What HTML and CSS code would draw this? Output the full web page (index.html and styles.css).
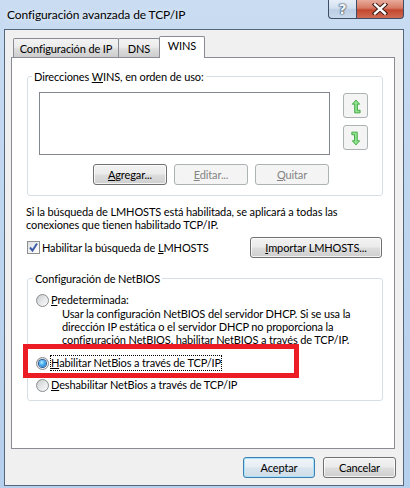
FILE: index.html
```html
<!DOCTYPE html>
<html>
<head>
    <title>Configuración avanzada de TCP/IP</title>
    <link rel="stylesheet" href="styles.css">
</head>
<body>
    <div class="window">
        <div class="titlebar">
            <span class="title">Configuración avanzada de TCP/IP</span>
            <div class="caption-buttons">
                <div class="cap-btn help">?</div>
                <div class="cap-btn close">
                    <svg width="16" height="12" viewBox="0 0 16 12">
                        <path d="M3 1.5 L13 10.5 M13 1.5 L3 10.5" stroke="#3a1a14" stroke-width="4.4" stroke-linecap="square"/>
                        <path d="M3 1.5 L13 10.5 M13 1.5 L3 10.5" stroke="#fff" stroke-width="2.4" stroke-linecap="square"/>
                    </svg>
                </div>
            </div>
        </div>

        <div class="client">
            <div class="tabs">
                <div class="tab">Configuración de IP</div>
                <div class="tab">DNS</div>
                <div class="tab active">WINS</div>
            </div>

            <div class="panel">
                <fieldset class="group wins-group">
                    <legend>Direcciones <u>W</u>INS, en orden de uso:</legend>
                    <div class="list-row">
                        <div class="listbox"></div>
                        <div class="arrows">
                            <button class="btn icon-btn">
                                <svg width="25" height="25" viewBox="0 0 25 25">
                                    <path d="M13 5.5 L17 10 L14.6 10 L14.6 16.6 L17.5 16.6 L17.5 19.4 L11.6 19.4 L11.6 10 L9 10 Z" fill="#8fe38f" stroke="#3fa63f" stroke-width="1"/>
                                </svg>
                            </button>
                            <button class="btn icon-btn">
                                <svg width="25" height="25" viewBox="0 0 25 25">
                                    <path d="M13 5.5 L17 10 L14.6 10 L14.6 16.6 L17.5 16.6 L17.5 19.4 L11.6 19.4 L11.6 10 L9 10 Z" fill="#8fe38f" stroke="#3fa63f" stroke-width="1" transform="rotate(180 13 12.5)"/>
                                </svg>
                            </button>
                        </div>
                    </div>
                    <div class="btn-row">
                        <button class="btn"><u>A</u>gregar...</button>
                        <button class="btn" disabled><u>E</u>ditar...</button>
                        <button class="btn" disabled><u>Q</u>uitar</button>
                    </div>
                </fieldset>

                <p class="note">Si la búsqueda de LMHOSTS está habilitada, se aplicará a todas las<br>conexiones que tienen habilitado TCP/IP.</p>

                <div class="lmhosts-row">
                    <label class="check">
                        <span class="checkbox">
                            <svg width="11" height="11" viewBox="0 0 11 11">
                                <path d="M2 5.5 L4.5 8.5 L9 1.5" fill="none" stroke="#3f5da8" stroke-width="2"/>
                            </svg>
                        </span>
                        <span>Habilitar la búsqueda de <u>L</u>MHOSTS</span>
                    </label>
                    <button class="btn import-btn"><u>I</u>mportar LMHOSTS...</button>
                </div>

                <fieldset class="group netbios-group">
                    <legend>Configuración de NetBIOS</legend>
                    <div class="radio-row">
                        <span class="radio"></span>
                        <span class="radio-label"><u>P</u>redeterminada:</span>
                    </div>
                    <p class="desc">Usar la configuración NetBIOS del servidor DHCP. Si se usa la<br>dirección IP estática o el servidor DHCP no proporciona la<br>configuración NetBIOS, habilitar NetBIOS a través de TCP/IP.</p>
                    <div class="radio-row second">
                        <span class="radio checked"></span>
                        <span class="radio-label focused"><u>H</u>abilitar NetBios a través de TCP/IP</span>
                    </div>
                    <div class="radio-row third">
                        <span class="radio"></span>
                        <span class="radio-label"><u>D</u>eshabilitar NetBios a través de TCP/IP</span>
                    </div>
                </fieldset>
            </div>

            <div class="dialog-buttons">
                <button class="btn default">Aceptar</button>
                <button class="btn cancel">Cancelar</button>
            </div>
        </div>
    </div>

    <!-- red annotation box drawn over the dialog -->
    <div class="highlight"></div>
</body>
</html>
```

FILE: styles.css
```css
* {
    margin: 0;
    padding: 0;
    box-sizing: border-box;
}

body {
    width: 410px;
    height: 488px;
    overflow: hidden;
    position: relative;
    font-family: Lato, 'Noto Sans', sans-serif;
    font-size: 11px;
    letter-spacing: -0.12px;
    color: #000;
    background: linear-gradient(180deg, #c9dcf2 0%, #bfd6ef 40%, #b6cfec 100%);
}

u {
    text-decoration: underline;
    text-underline-offset: 1px;
}

.window {
    height: 488px;
    padding: 0 6px 2px 4px;
    display: flex;
    flex-direction: column;
}

/* title bar */

.titlebar {
    height: 29px;
    display: flex;
    justify-content: space-between;
    align-items: flex-start;
}

.title {
    padding-left: 3px;
    line-height: 30px;
    font-size: 12px;
    letter-spacing: -0.1px;
    color: #000;
    text-shadow: 0 0 6px rgba(255,255,255,0.9);
}

.caption-buttons {
    display: flex;
}

.cap-btn {
    height: 19px;
    display: flex;
    justify-content: center;
    align-items: center;
    border: 1px solid #3d4d66;
    border-top: none;
}

.help {
    width: 28px;
    border-right: none;
    border-radius: 0 0 0 4px;
    background: linear-gradient(180deg, #e6eef8 0%, #d3e0ef 45%, #bccee5 55%, #c9d9ec 100%);
    color: #f4f7fb;
    font-size: 14px;
    font-weight: bold;
    font-family: 'DejaVu Sans', sans-serif;
    text-shadow: 0 0 1px #33445c, 0 0 1px #33445c, 0 0 2px #33445c;
}

.close {
    width: 48px;
    border-radius: 0 0 4px 0;
    background: linear-gradient(180deg, #e8ab9c 0%, #d77a64 45%, #c4472f 55%, #cf6a52 100%);
}

/* client area */

.client {
    height: 457px;
    border: 1px solid #56677d;
    background: #f0f0f0;
    padding: 6px 8px 0 6px;
}

.tabs {
    display: flex;
    align-items: flex-end;
    padding-left: 2px;
}

.tab {
    height: 19px;
    padding-top: 3px;
    text-align: center;
    white-space: nowrap;
    border: 1px solid #898c95;
    border-bottom: none;
    border-radius: 2px 2px 0 0;
    background: linear-gradient(180deg, #f3f3f3 0%, #ebebeb 45%, #dddddd 55%, #cdcdcd 100%);
}

.tab:nth-child(1) {
    width: 106px;
}

.tab:nth-child(2) {
    width: 42px;
    margin-left: -1px;
}

.tab.active {
    width: 46px;
    height: 22px;
    margin-left: -1px;
    margin-bottom: -1px;
    padding-top: 2px;
    background: #fff;
    position: relative;
}

.panel {
    height: 392px;
    border: 1px solid #898c95;
    background: #fff;
    padding: 12px 11px 0 15px;
}

.group {
    border: 1px solid #d5dfe5;
    border-radius: 3px;
    min-width: 0;
}

.group legend {
    line-height: 13px;
    padding: 0 2px;
    white-space: nowrap;
}

.wins-group {
    padding: 9px 0 10px 11px;
}

.wins-group legend {
    margin-left: -7px;
}

.list-row {
    display: flex;
    gap: 13px;
}

.listbox {
    width: 291px;
    height: 63px;
    border: 1px solid #828790;
    background: #fff;
}

.arrows {
    display: flex;
    flex-direction: column;
    gap: 7px;
    margin-top: 1px;
}

.btn {
    height: 21px;
    width: 74px;
    font-family: inherit;
    font-size: 11px;
    letter-spacing: inherit;
    color: #000;
    border: 1px solid #707070;
    border-radius: 3px;
    background: linear-gradient(180deg, #f2f2f2 0%, #ebebeb 48%, #dddddd 52%, #cfcfcf 100%);
    box-shadow: inset 0 0 0 1px rgba(255,255,255,0.75);
    white-space: nowrap;
}

.btn:disabled {
    border-color: #adb2b5;
    background: #f4f4f4;
    color: #838383;
    box-shadow: none;
}

.icon-btn {
    width: 25px;
    height: 25px;
    display: flex;
    border-color: #adb2b5;
    background: #f4f4f4;
    box-shadow: none;
}

.btn-row {
    display: flex;
    gap: 7px;
    margin-top: 9px;
    margin-left: 54px;
}

.note {
    margin-top: 9px;
    margin-left: -1px;
    line-height: 13px;
    white-space: nowrap;
}

.lmhosts-row {
    margin-top: 6px;
    display: flex;
    justify-content: space-between;
    align-items: center;
}

.check {
    display: flex;
    align-items: center;
    gap: 2px;
    white-space: nowrap;
}

.checkbox {
    width: 13px;
    height: 13px;
    border: 1px solid #8e8f8f;
    background: linear-gradient(135deg, #dcdee2 0%, #f4f4f4 60%, #ffffff 100%);
    display: flex;
}

.import-btn {
    width: 132px;
    margin-right: 1px;
}

.netbios-group {
    margin-top: 14px;
    padding: 7px 0 7px 8px;
}

.netbios-group legend {
    margin-left: -3px;
}

.radio-row {
    height: 16px;
    display: flex;
    align-items: center;
    gap: 1px;
    white-space: nowrap;
}

.radio-row.second {
    margin-top: 9px;
}

.radio-row.third {
    margin-top: 6px;
}

.radio {
    width: 13px;
    height: 13px;
    border-radius: 50%;
    border: 1px solid #8a8c8e;
    background: linear-gradient(135deg, #c9cbce 0%, #e8e9ea 55%, #fbfbfb 100%);
    display: flex;
    justify-content: center;
    align-items: center;
}

.radio.checked::after {
    content: '';
    width: 7px;
    height: 7px;
    border-radius: 50%;
    background: radial-gradient(circle at 40% 35%, #b9ecff 0%, #4ab1f2 40%, #1e5fb4 100%);
    box-shadow: 0 0 0 1px #265a92;
}

.radio-label {
    line-height: 14px;
    border: 1px dotted transparent;
}

.radio-label.focused {
    border-color: #000;
}

.desc {
    margin-top: -1px;
    margin-left: 26px;
    line-height: 13px;
    white-space: nowrap;
}

.dialog-buttons {
    margin-top: 8px;
    margin-right: -1px;
    display: flex;
    justify-content: flex-end;
    gap: 8px;
}

.dialog-buttons .btn {
    width: 73px;
}

.btn.default {
    width: 72px;
    border-color: #3c7fb1;
    background: linear-gradient(180deg, #f1f5f8 0%, #e6eef4 48%, #d9e5ee 52%, #d0dde8 100%);
    box-shadow: inset 0 0 0 1px #a9e2fa;
}

.highlight {
    position: absolute;
    left: 23px;
    top: 344px;
    width: 276px;
    height: 34px;
    border: 5px solid #ec1c24;
}
```
